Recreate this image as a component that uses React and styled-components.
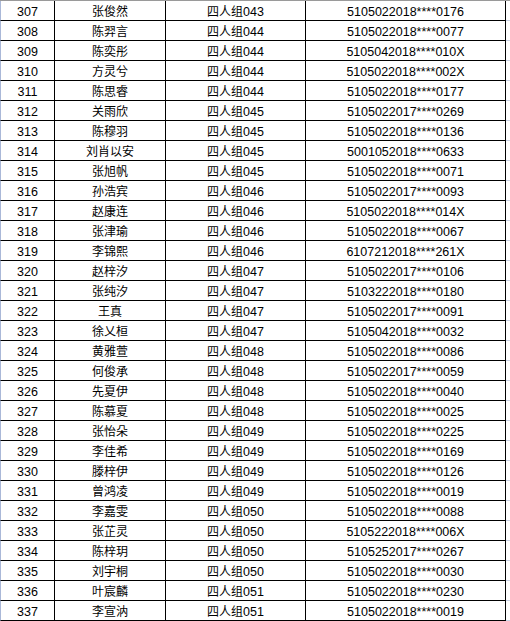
import React from 'react'
import styled, { createGlobalStyle } from 'styled-components'

const GlobalStyle = createGlobalStyle`
    html, body {
        margin: 0;
        padding: 0;
        background: #ffffff;
    }
`

const Sheet = styled.div`
    width: 510px;
    border-top: 1px solid #9a9a9a;
    font-family: "Liberation Sans", "Noto Sans CJK SC", Arial, sans-serif;
    font-size: 12.5px;
    color: #000;
`

const Row = styled.div`
    display: grid;
    grid-template-columns: 55px 111px 140px 200px 4px;
    height: 20px;
`

const Cell = styled.div`
    box-sizing: border-box;
    height: 20px;
    padding-top: 4px;
    line-height: 15px;
    text-align: center;
    white-space: nowrap;
    overflow: hidden;
    border-bottom: 1px solid #000;
    border-right: 1px solid #000;
    border-left: ${(p) => (p.first ? '1px solid #aab8d8' : 'none')};
`

const Filler = styled.div`
    box-sizing: border-box;
    height: 20px;
    border-bottom: 1px solid #c9d1e3;
`

const Name = styled.span`
    font-size: 12px;
`

const rows = [
    ['307', '张俊然', '043', '5105022018****0176'],
    ['308', '陈羿言', '044', '5105022018****0077'],
    ['309', '陈奕彤', '044', '5105042018****010X'],
    ['310', '方灵兮', '044', '5105022018****002X'],
    ['311', '陈思睿', '044', '5105022018****0177'],
    ['312', '关雨欣', '045', '5105022017****0269'],
    ['313', '陈穆羽', '045', '5105022018****0136'],
    ['314', '刘肖以安', '045', '5001052018****0633'],
    ['315', '张旭帆', '045', '5105022018****0071'],
    ['316', '孙浩宾', '046', '5105022017****0093'],
    ['317', '赵康连', '046', '5105022018****014X'],
    ['318', '张津瑜', '046', '5105022018****0067'],
    ['319', '李锦熙', '046', '6107212018****261X'],
    ['320', '赵梓汐', '047', '5105022017****0106'],
    ['321', '张纯汐', '047', '5103222018****0180'],
    ['322', '王真', '047', '5105022017****0091'],
    ['323', '徐乂桓', '047', '5105042018****0032'],
    ['324', '黄雅萱', '048', '5105022018****0086'],
    ['325', '何俊承', '048', '5105022017****0059'],
    ['326', '先夏伊', '048', '5105022018****0040'],
    ['327', '陈慕夏', '048', '5105022018****0025'],
    ['328', '张怡朵', '049', '5105022018****0225'],
    ['329', '李佳希', '049', '5105022018****0169'],
    ['330', '滕梓伊', '049', '5105022018****0126'],
    ['331', '曾鸿凌', '049', '5105022018****0019'],
    ['332', '李嘉雯', '050', '5105022018****0088'],
    ['333', '张芷灵', '050', '5105222018****006X'],
    ['334', '陈梓玥', '050', '5105252017****0267'],
    ['335', '刘宇桐', '050', '5105022018****0030'],
    ['336', '叶宸麟', '051', '5105022018****0230'],
    ['337', '李宣汭', '051', '5105022018****0019'],
]

const App = () => {
    return (
        <>
            <GlobalStyle />
            <Sheet>
                {rows.map(([no, name, group, id]) => (
                    <Row key={no}>
                        <Cell first>{no}</Cell>
                        <Cell><Name>{name}</Name></Cell>
                        <Cell><Name>四人组</Name>{group}</Cell>
                        <Cell>{id}</Cell>
                        <Filler />
                    </Row>
                ))}
            </Sheet>
        </>
    )
}

export default App
